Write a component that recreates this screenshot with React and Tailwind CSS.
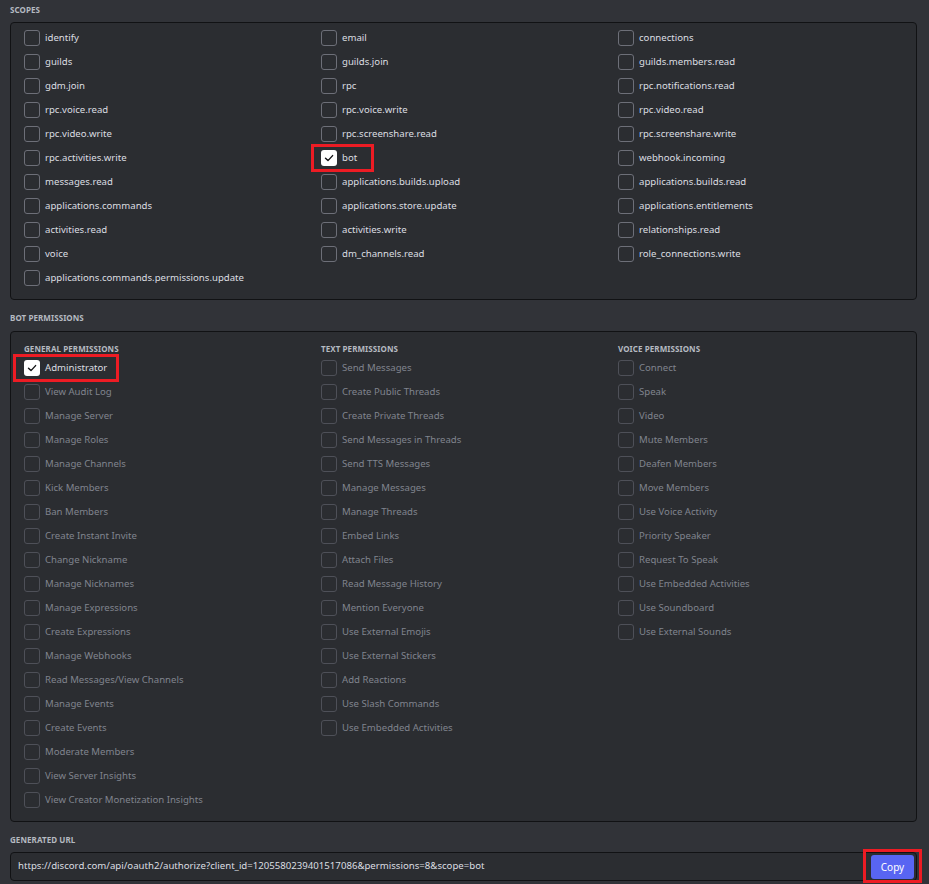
const scopes = [
  'identify', 'email', 'connections',
  'guilds', 'guilds.join', 'guilds.members.read',
  'gdm.join', 'rpc', 'rpc.notifications.read',
  'rpc.voice.read', 'rpc.voice.write', 'rpc.video.read',
  'rpc.video.write', 'rpc.screenshare.read', 'rpc.screenshare.write',
  'rpc.activities.write', 'bot', 'webhook.incoming',
  'messages.read', 'applications.builds.upload', 'applications.builds.read',
  'applications.commands', 'applications.store.update', 'applications.entitlements',
  'activities.read', 'activities.write', 'relationships.read',
  'voice', 'dm_channels.read', 'role_connections.write',
  'applications.commands.permissions.update',
];

const general = [
  'Administrator', 'View Audit Log', 'Manage Server', 'Manage Roles', 'Manage Channels',
  'Kick Members', 'Ban Members', 'Create Instant Invite', 'Change Nickname', 'Manage Nicknames',
  'Manage Expressions', 'Create Expressions', 'Manage Webhooks', 'Read Messages/View Channels',
  'Manage Events', 'Create Events', 'Moderate Members', 'View Server Insights',
  'View Creator Monetization Insights',
];

const text = [
  'Send Messages', 'Create Public Threads', 'Create Private Threads', 'Send Messages in Threads',
  'Send TTS Messages', 'Manage Messages', 'Manage Threads', 'Embed Links', 'Attach Files',
  'Read Message History', 'Mention Everyone', 'Use External Emojis', 'Use External Stickers',
  'Add Reactions', 'Use Slash Commands', 'Use Embedded Activities',
];

const voice = [
  'Connect', 'Speak', 'Video', 'Mute Members', 'Deafen Members', 'Move Members',
  'Use Voice Activity', 'Priority Speaker', 'Request To Speak', 'Use Embedded Activities',
  'Use Soundboard', 'Use External Sounds',
];

const Checkbox = ({ checked, disabled }) => {
  if (checked) {
    return (
      <span className="w-4 h-4 rounded-[3px] bg-white flex items-center justify-center shrink-0">
        <svg width="10" height="10" viewBox="0 0 10 10" fill="none">
          <path d="M1.5 5.2 L4 7.6 L8.6 2.6" stroke="#111214" strokeWidth="1.4" strokeLinecap="round" strokeLinejoin="round" />
        </svg>
      </span>
    );
  }
  return (
    <span
      className={`w-4 h-4 rounded-[3px] border shrink-0 ${disabled ? 'border-[#4e5058]' : 'border-[#6d6f78]'}`}
    />
  );
};

const Item = ({ label, checked, disabled, highlight }) => (
  <div className="relative h-6 flex items-center gap-[5px]">
    <Checkbox checked={checked} disabled={disabled} />
    <span className={`text-[9.6px] leading-none whitespace-nowrap ${disabled ? 'text-[#80848e]' : 'text-[#dbdee1]'}`}>
      {label}
    </span>
    {highlight && <span className={`absolute border-[3px] border-[#ed1c24] pointer-events-none ${highlight}`} />}
  </div>
);

const Label = ({ children, className = '' }) => (
  <div className={`text-[8px] font-bold uppercase text-[#b5bac1] leading-3 tracking-[0.01em] ${className}`}>{children}</div>
);

const PermColumn = ({ title, items }) => (
  <div>
    <Label className="mb-px">{title}</Label>
    {items.map((p) => (
      <Item
        key={p}
        label={p}
        checked={p === 'Administrator'}
        disabled={p !== 'Administrator'}
        highlight={p === 'Administrator' ? '-left-[11px] top-[-2px] w-[106px] h-[28px]' : ''}
      />
    ))}
  </div>
);

export default function App() {
  return (
    <div className="w-[929px] h-[884px] bg-[#313338] px-[10px] pt-1 overflow-hidden" style={{ fontFamily: '"Noto Sans", sans-serif' }}>
      <div className="w-[907px]">
        <Label className="mb-[6px]">Scopes</Label>
        <div className="bg-[#2b2d31] border border-[#111214] rounded-[4px] pl-[13px] pt-[3px] pb-[9px] grid grid-cols-[297px_297px_1fr]">
          {scopes.map((s) => (
            <Item
              key={s}
              label={s}
              checked={s === 'bot'}
              highlight={s === 'bot' ? '-left-[10px] top-[-2px] w-[63px] h-[28px]' : ''}
            />
          ))}
        </div>

        <Label className="mt-3 mb-[7px]">Bot Permissions</Label>
        <div className="bg-[#2b2d31] border border-[#111214] rounded-[4px] pl-[13px] pt-[11px] pb-[9px] grid grid-cols-[297px_297px_1fr] items-start">
          <PermColumn title="General Permissions" items={general} />
          <PermColumn title="Text Permissions" items={text} />
          <PermColumn title="Voice Permissions" items={voice} />
        </div>

        <Label className="mt-3 mb-[6px]">Generated URL</Label>
        <div className="relative h-[29px] bg-[#2b2d31] border border-[#111214] rounded-[4px] flex items-center justify-between pl-[7px] pr-[2px]">
          <span className="text-[9.65px] text-[#dbdee1] whitespace-nowrap">
            https://discord.com/api/oauth2/authorize?client_id=1205580239401517086&amp;permissions=8&amp;scope=bot
          </span>
          <button className="relative w-[43px] h-[24px] rounded-[3px] bg-[#5865f2] text-white text-[10px] leading-none">
            Copy
            <span className="absolute -left-[8px] -top-[6px] w-[59px] h-[34px] border-[3px] border-[#ed1c24] pointer-events-none" />
          </button>
        </div>
      </div>
    </div>
  );
}
